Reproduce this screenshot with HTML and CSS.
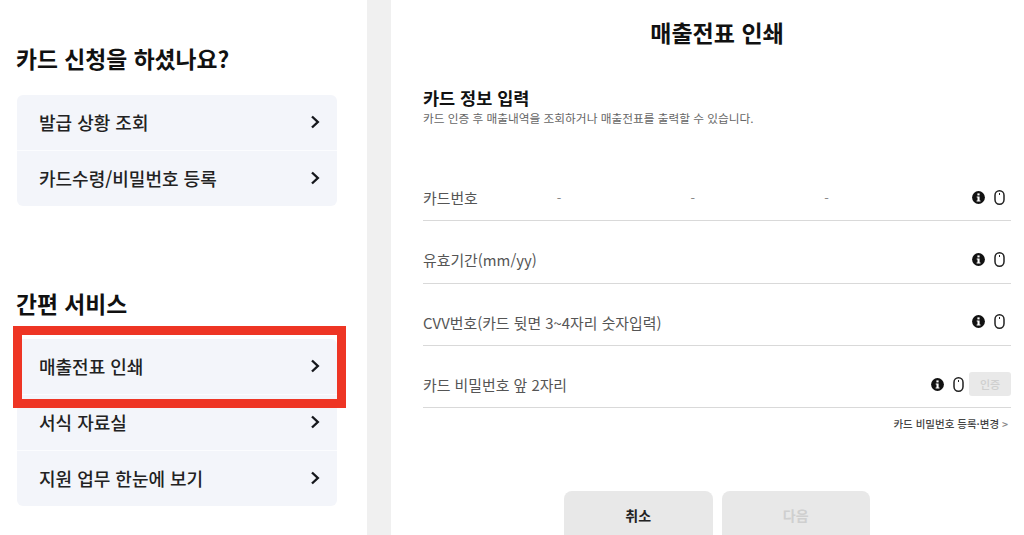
FILE: index.html
```html
<!DOCTYPE html>
<html lang="ko">
<head>
    <meta charset="UTF-8">
    <meta name="viewport" content="width=device-width, initial-scale=1.0">
    <title>매출전표 인쇄</title>
    <link rel="stylesheet" href="styles.css">
</head>
<body>

    <svg class="icon-defs" width="0" height="0">
        <symbol id="chevron" viewBox="0 0 10 14">
            <path d="M2 1.5 L7.8 7 L2 12.5" fill="none" stroke="#15171c" stroke-width="2.4"/>
        </symbol>
        <symbol id="info" viewBox="0 0 13 13">
            <circle cx="6.5" cy="6.5" r="6.4" fill="#111"/>
            <rect x="5.4" y="2.4" width="2.2" height="2" fill="#fff"/>
            <path d="M4.7 5.4 H7.6 V9.4 H8.5 V10.6 H4.6 V9.4 H5.5 V6.6 H4.7 Z" fill="#fff"/>
        </symbol>
        <symbol id="mouse" viewBox="0 0 11 15">
            <rect x="1" y="0.8" width="9" height="13.4" rx="4.4" fill="none" stroke="#222" stroke-width="1.5"/>
            <rect x="5" y="3" width="1" height="2" fill="#222"/>
        </symbol>
    </svg>

    <div class="page">
        <aside class="side">
            <section class="group group-first">
                <h2>카드 신청을 하셨나요?</h2>
                <ul class="menu">
                    <li>발급 상황 조회<svg class="chev"><use href="#chevron"/></svg></li>
                    <li>카드수령/비밀번호 등록<svg class="chev"><use href="#chevron"/></svg></li>
                </ul>
            </section>
            <section class="group group-second">
                <h2>간편 서비스</h2>
                <ul class="menu">
                    <li class="marked">매출전표 인쇄<svg class="chev"><use href="#chevron"/></svg></li>
                    <li>서식 자료실<svg class="chev"><use href="#chevron"/></svg></li>
                    <li>지원 업무 한눈에 보기<svg class="chev"><use href="#chevron"/></svg></li>
                </ul>
            </section>
        </aside>

        <div class="band"></div>

        <main class="content">
            <h1>매출전표 인쇄</h1>

            <h3>카드 정보 입력</h3>
            <p class="desc">카드 인증 후 매출내역을 조회하거나 매출전표를 출력할 수 있습니다.</p>

            <div class="fields">
                <div class="field">
                    <label>카드번호</label>
                    <div class="dashes"><span>-</span><span>-</span><span>-</span></div>
                    <svg class="ico-info"><use href="#info"/></svg>
                    <svg class="ico-mouse"><use href="#mouse"/></svg>
                </div>
                <div class="field">
                    <label>유효기간(mm/yy)</label>
                    <svg class="ico-info"><use href="#info"/></svg>
                    <svg class="ico-mouse"><use href="#mouse"/></svg>
                </div>
                <div class="field">
                    <label>CVV번호(카드 뒷면 3~4자리 숫자입력)</label>
                    <svg class="ico-info"><use href="#info"/></svg>
                    <svg class="ico-mouse"><use href="#mouse"/></svg>
                </div>
                <div class="field">
                    <label>카드 비밀번호 앞 2자리</label>
                    <svg class="ico-info"><use href="#info"/></svg>
                    <svg class="ico-mouse"><use href="#mouse"/></svg>
                    <button class="auth">인증</button>
                </div>
            </div>

            <a class="pw-link">카드 비밀번호 등록·변경 <span class="pw-arrow">&gt;</span></a>

            <div class="actions">
                <button class="btn">취소</button>
                <button class="btn btn-off">다음</button>
            </div>
        </main>
    </div>

</body>
</html>
```

FILE: styles.css
```css
*, *::after {
    margin: 0;
    padding: 0;
    box-sizing: border-box;
}

html, body {
    height: 535px;
    overflow: hidden;
}

body {
    font-family: "Noto Sans CJK KR", "Noto Sans", sans-serif;
    background: #fff;
    color: #111;
}

.icon-defs {
    position: absolute;
}

.page {
    display: flex;
    height: 535px;
}

/* left menu */
.side {
    width: 367px;
    padding: 0 30px 0 17px;
}

.group h2 {
    font-size: 22.8px;
    line-height: 30px;
    font-weight: 700;
    margin-left: -1px;
}

.group-first {
    padding-top: 44px;
}

.group-first h2 {
    margin-bottom: 21px;
}

.group-second {
    padding-top: 83px;
}

.group-second h2 {
    margin-bottom: 20px;
}

.menu {
    list-style: none;
    background: #f3f5fa;
    border-radius: 6px;
}

.menu li {
    position: relative;
    display: flex;
    align-items: center;
    justify-content: space-between;
    height: 56px;
    padding: 0 17px 2px 22px;
    font-size: 18px;
    font-weight: 500;
    color: #222;
    border-bottom: 1px solid #fbfcfe;
}

.menu li:last-child {
    border-bottom: none;
    height: 55px;
}

.chev {
    width: 10px;
    height: 14px;
}

/* red highlight over the menu item */
.marked::after {
    content: "";
    position: absolute;
    left: -4px;
    top: -13px;
    width: 333px;
    height: 82px;
    border: 9px solid #ee3524;
}

.band {
    width: 24px;
    background: #f0f0f0;
}

/* right form */
.content {
    flex: 1;
    padding: 0 13px 0 32px;
}

.content h1 {
    font-size: 23px;
    line-height: 32px;
    font-weight: 700;
    text-align: center;
    height: 48px;
    padding-top: 16px;
    margin-bottom: 37px;
}

.content h3 {
    font-size: 17.5px;
    line-height: 25px;
    font-weight: 700;
}

.desc {
    font-size: 11.7px;
    line-height: 16px;
    color: #666;
}

.fields {
    margin-top: 33px;
}

.field {
    display: flex;
    align-items: center;
    height: 62.3px;
    border-bottom: 1px solid #d9d9d9;
    padding-top: 16px;
    font-size: 14.9px;
    color: #555;
}

.field label {
    flex: none;
}

.dashes {
    display: flex;
    width: 272px;
    margin-left: 79px;
    justify-content: space-between;
    font-size: 13px;
    color: #888;
}

.ico-info {
    width: 13px;
    height: 13px;
    margin-left: auto;
    margin-top: -1px;
}

.ico-mouse {
    width: 11px;
    height: 15px;
    margin: -1px 6px 0 9px;
}

.auth {
    width: 42px;
    height: 24px;
    border: none;
    border-radius: 3px;
    background: #e9e9e9;
    color: #cfcfcf;
    font: 500 11px "Noto Sans CJK KR", sans-serif;
    margin: -2px 0 0 5px;
}

.field:last-child .ico-mouse {
    margin-right: 0;
}

.pw-link {
    display: block;
    text-align: right;
    font-size: 10.5px;
    line-height: 16px;
    font-weight: 500;
    color: #444;
    margin-top: 8px;
    padding-right: 3px;
}

.pw-arrow {
    color: #888;
}

.actions {
    display: flex;
    justify-content: center;
    gap: 9px;
    margin-top: 59px;
}

.btn {
    width: 148.5px;
    height: 60px;
    border: none;
    border-radius: 8px;
    background: #e8e8e8;
    padding-bottom: 12px;
    color: #222;
    font: 700 14px "Noto Sans CJK KR", sans-serif;
}

.btn-off {
    color: #cfcfcf;
}
```
